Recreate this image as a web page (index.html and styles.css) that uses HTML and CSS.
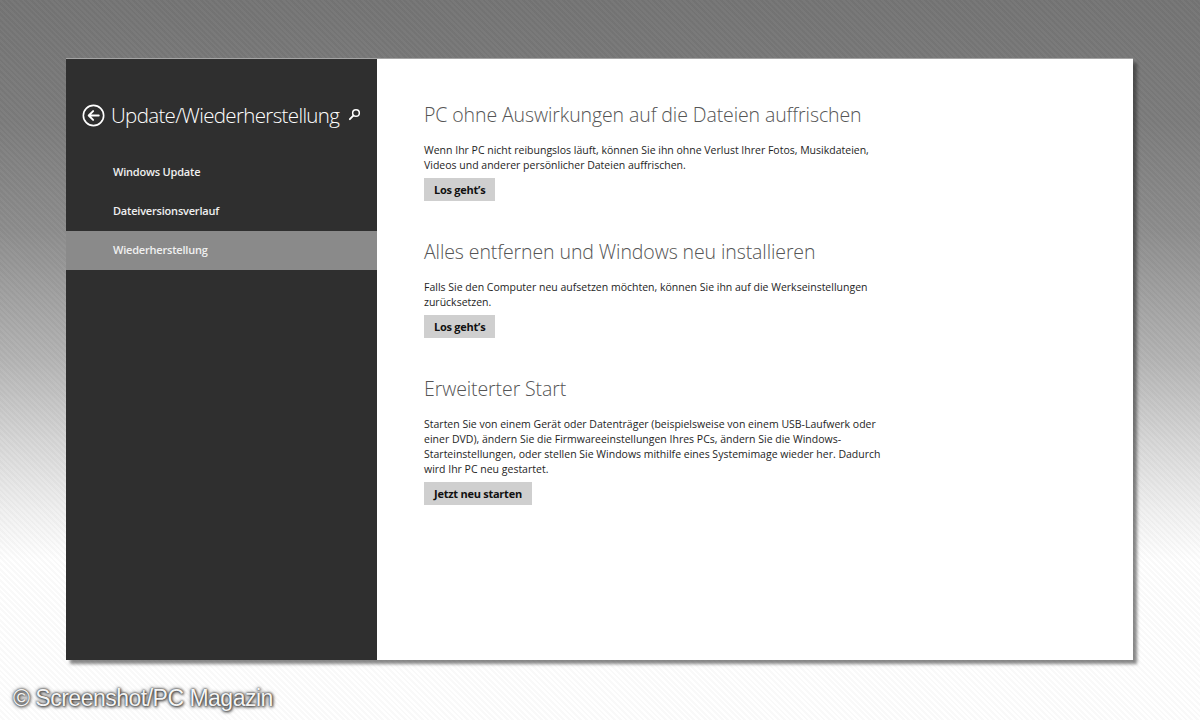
FILE: index.html
```html
<!DOCTYPE html>
<html lang="de">
<head>
<meta charset="utf-8">
<title>Update/Wiederherstellung</title>
<link rel="stylesheet" href="styles.css">
</head>
<body>
<div class="page">
  <div class="window">
    <aside class="sidebar">
      <div class="side-header">
        <svg class="back" viewBox="0 0 24 24" width="23" height="23" aria-hidden="true">
          <circle cx="12" cy="12" r="10.6" fill="none" stroke="#fff" stroke-width="1.7"/>
          <path d="M17.5 12H7.2M11.6 7.4L7 12l4.6 4.6" fill="none" stroke="#fff" stroke-width="2" stroke-linecap="round" stroke-linejoin="round"/>
        </svg>
        <span class="side-title">Update/Wiederherstellung</span>
        <svg class="search" viewBox="0 0 14 14" width="13" height="13" aria-hidden="true">
          <circle cx="8.6" cy="5.4" r="3.6" fill="none" stroke="#fff" stroke-width="1.6"/>
          <path d="M6 8L2 12" stroke="#fff" stroke-width="2" stroke-linecap="round"/>
        </svg>
      </div>
      <nav class="nav">
        <div class="nav-item">Windows Update</div>
        <div class="nav-item">Dateiversionsverlauf</div>
        <div class="nav-item active">Wiederherstellung</div>
      </nav>
    </aside>
    <main class="content">
      <section class="group">
        <h2>PC ohne Auswirkungen auf die Dateien auffrischen</h2>
        <p>Wenn Ihr PC nicht reibungslos läuft, können Sie ihn ohne Verlust Ihrer Fotos, Musikdateien,<br>Videos und anderer persönlicher Dateien auffrischen.</p>
        <button class="btn">Los geht’s</button>
      </section>
      <section class="group">
        <h2>Alles entfernen und Windows neu installieren</h2>
        <p>Falls Sie den Computer neu aufsetzen möchten, können Sie ihn auf die Werkseinstellungen<br>zurücksetzen.</p>
        <button class="btn">Los geht’s</button>
      </section>
      <section class="group">
        <h2>Erweiterter Start</h2>
        <p>Starten Sie von einem Gerät oder Datenträger (beispielsweise von einem USB-Laufwerk oder<br>einer DVD), ändern Sie die Firmwareeinstellungen Ihres PCs, ändern Sie die Windows-<br>Starteinstellungen, oder stellen Sie Windows mithilfe eines Systemimage wieder her. Dadurch<br>wird Ihr PC neu gestartet.</p>
        <button class="btn">Jetzt neu starten</button>
      </section>
    </main>
  </div>
  <div class="credit">© Screenshot/PC Magazin</div>
</div>
</body>
</html>
```

FILE: styles.css
```css
html, body {
  margin: 0;
  padding: 0;
}
body {
  width: 1200px;
  height: 720px;
  overflow: hidden;
  background:
    repeating-linear-gradient(45deg, rgba(255,255,255,0.025) 0 2px, rgba(0,0,0,0.025) 2px 4px),
    linear-gradient(to bottom, #757575 0px, #7c7c7c 120px, #8d8d8d 230px, #b4b4b4 360px, #d6d6d6 440px, #f0f0f0 510px, #ffffff 560px, #ffffff 720px);
  font-family: "Open Sans", "Liberation Sans", sans-serif;
}
.page {
  padding: 59px 0 0 66px;
}
.window {
  display: flex;
  width: 1067px;
  height: 601px;
  box-shadow: 4px 4px 3px rgba(40,40,40,0.55), 0 -1px 0 #a4a4a4;
}
.sidebar {
  width: 311px;
  flex: none;
  background: #2f2f2f;
  color: #fff;
}
.side-header {
  display: flex;
  align-items: center;
  height: 28px;
  margin-top: 42px;
  padding-left: 16px;
}
.back {
  flex: none;
  margin-right: 6px;
}
.side-title {
  font-size: 20.5px;
  font-weight: 300;
  letter-spacing: -0.65px;
  line-height: 28px;
}
.search {
  margin-left: 9px;
  margin-top: -2px;
}
.nav {
  margin-top: 24px;
}
.nav-item {
  height: 39px;
  line-height: 38px;
  padding-left: 47px;
  font-size: 11px;
  font-weight: 600;
  letter-spacing: -0.2px;
  color: #f0f0f0;
}
.nav-item.active {
  background: #8a8a8a;
}
.content {
  flex: 1;
  background: #fff;
  padding: 42px 0 0 47px;
}
.group {
  margin-bottom: 37px;
}
h2 {
  margin: 0;
  font-size: 19.5px;
  font-weight: 300;
  line-height: 28px;
  color: #555;
  letter-spacing: -0.1px;
}
p {
  margin: 14px 0 0;
  font-size: 10.5px;
  line-height: 15px;
  color: #1e1e1e;
  letter-spacing: 0;
}
.btn {
  display: block;
  margin-top: 5px;
  height: 23px;
  padding: 0 10px;
  border: 0;
  background: #cfcfcf;
  font-family: inherit;
  font-size: 11px;
  font-weight: 700;
  color: #111;
  letter-spacing: -0.25px;
}
.credit {
  margin: 24px 0 0 -53px;
  font-family: "Liberation Sans", Arial, sans-serif;
  font-size: 23px;
  line-height: 28px;
  color: #f4f4f4;
  letter-spacing: -0.5px;
  text-shadow: 0 0 2px #222, 0 0 4px #555, 1px 1px 3px #444;
}
```
